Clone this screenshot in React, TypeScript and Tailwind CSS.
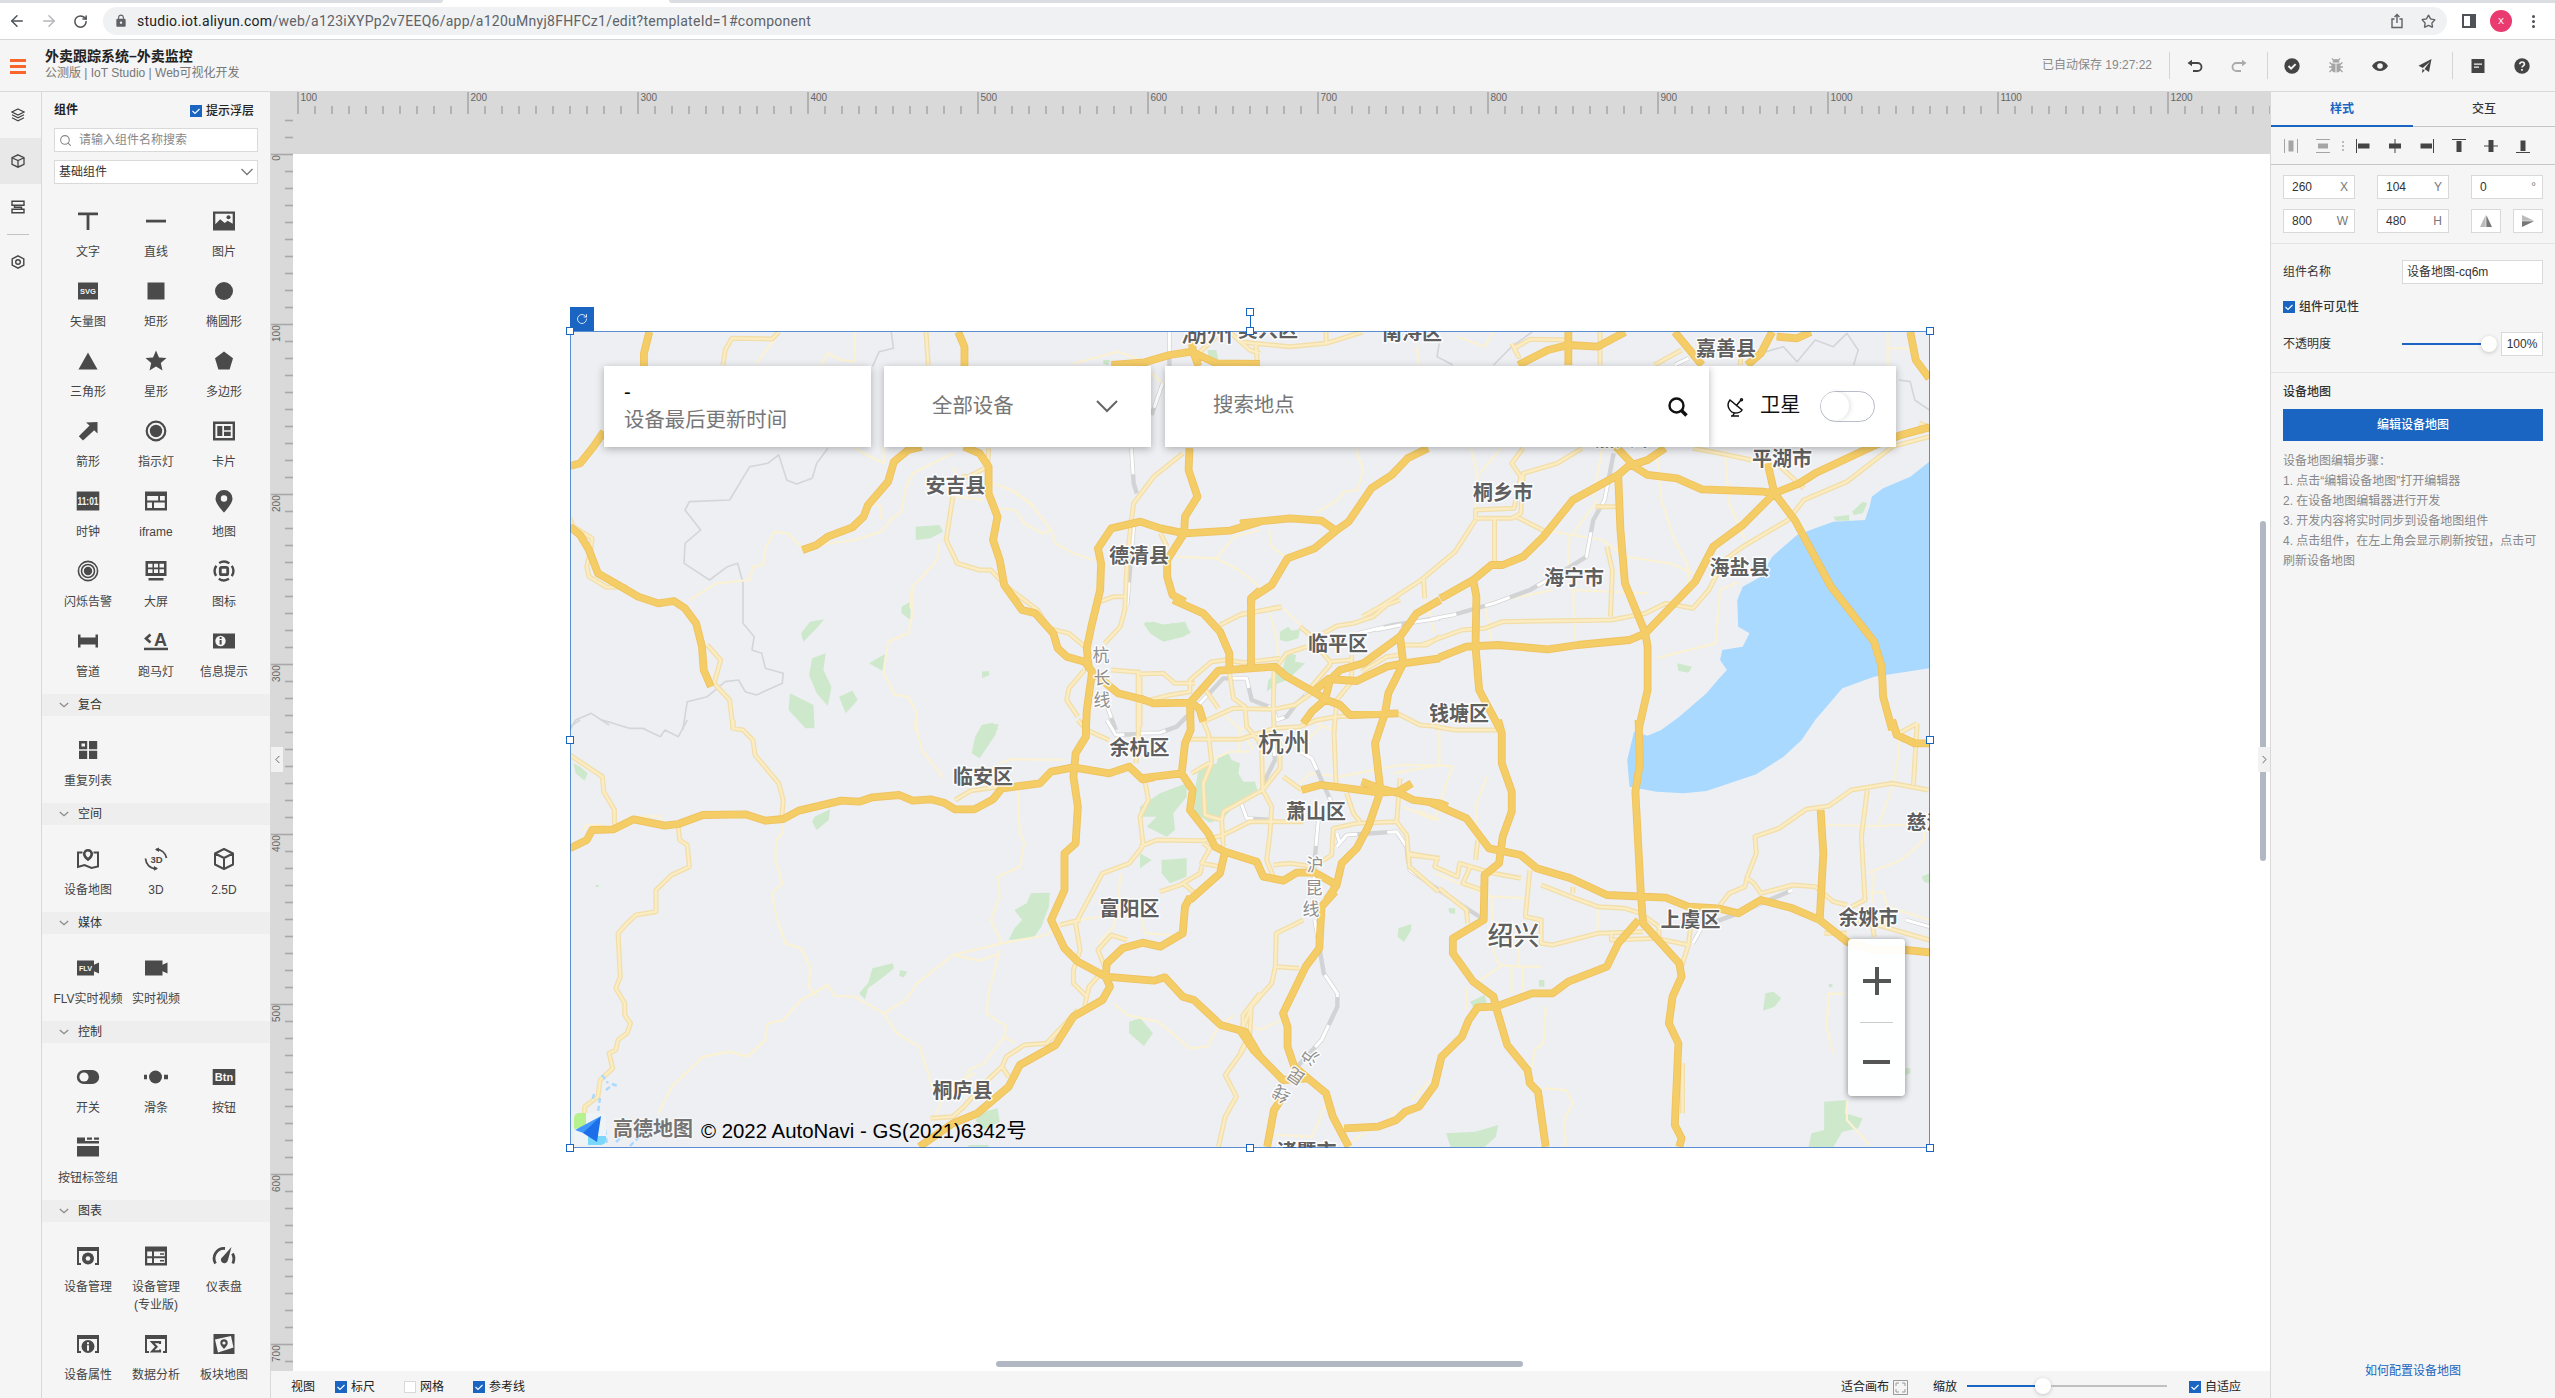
import React from "react";
import {
  LuArrowLeft,
  LuArrowRight,
  LuChevronLeft,
  LuChevronRight,
  LuRotateCw,
  LuSearch,
  LuStar,
} from "react-icons/lu";
import { MdLock } from "react-icons/md";

/* ---------------------------------------------------------------- */
/* Map                                                              */
/* ---------------------------------------------------------------- */

type Tile = {
  frame: string;
  green?: string;
  water?: string;
  border?: string;
  minor?: string;
  rail?: string;
  second?: string;
  major?: string;
};

const TILES: Tile[] = [
  {
    frame: "translate(560 300) scale(0.44643 0.33333)",
    green:
      "M797 680L850 675L858 695L830 715L797 720ZM540 1000L560 965L592 958L575 985L545 1025ZM565 1075L595 1060L590 1110L608 1160L600 1218L575 1180L558 1125ZM515 1180L568 1215L570 1285L550 1285L512 1230ZM625 1190L655 1172L667 1200L640 1240ZM692 1090L728 1062L722 1112ZM1310 965L1345 975L1400 965L1412 1000L1350 1020ZM765 920L785 905L785 960L765 940ZM1450 150L1470 150L1475 180L1455 180ZM1217 180L1232 180L1228 196L1217 192ZM945 1115L960 1112L962 1125L946 1135ZM945 1275L970 1268L983 1290L950 1290Z",
    border:
      "M742 96L747 145L715 155L700 200M600 445L575 490L565 535L530 552L508 540L490 465L465 490L425 500L380 600L290 605L280 630L315 690L280 730L278 790L335 840L375 800L398 790L410 850L410 970L435 1010L430 1050L452 1060L460 1105L500 1120L498 1150L440 1185L415 1175L400 1140L370 1145L330 1190L285 1205L275 1290M22 1290L35 1260L70 1240L110 1275",
    minor:
      "M660 96L660 185L630 180L600 160L585 195M485 110L440 190M290 900L350 850L425 840L432 800L455 795L460 745L480 695L510 700L543 745M575 735L660 720L720 695L740 660L765 635L775 560L790 520L880 460M690 600L718 620L720 660M850 730L845 780L790 860L790 940L780 1000L735 1025L725 1120L750 1185L780 1190L800 1240L795 1290M660 445L725 490L725 440M970 550L1020 575L1060 620L1100 690L1110 730L1150 760L1195 780M985 625L1020 630L1040 670L1080 700L1100 690M1380 770L1470 775L1510 710L1568 690M1470 775L1520 810L1568 860M1150 190L1180 180L1250 155L1300 180M880 500L895 540L890 590L950 600M1320 215L1350 250M788 860L785 925M1010 570L1060 615",
    rail: "M1365 96L1365 200M1280 445L1285 550L1292 580M1350 250L1325 345M1285 680L1270 920M1215 1180L1245 1290",
    second:
      "M490 96L475 117L385 115L370 150L365 195M820 96L825 195M22 655L30 680L72 715L70 740L60 800L65 830L105 862L150 860M330 1035L360 1080L345 1150L380 1200L388 1290M960 445L958 500L915 530L900 530M880 590L865 720L890 790L940 810L965 810L1000 860L1070 930L1095 985L1140 1000L1180 1045M1395 460L1330 530L1285 610L1278 680L1270 790L1265 930L1255 980L1220 1030M1210 905L1240 890L1268 890M1235 1110L1300 1117M1175 1110L1140 1165L1135 1200L1160 1250M1295 1120L1295 1290M1345 700L1360 740M1500 96L1545 150L1568 160M1470 110L1430 160",
    major:
      "M200 96L188 160L188 198M98 395L75 440L45 490L22 498M22 680L45 705L65 750L85 820L130 855L175 890L220 910L255 903L280 925L305 970L318 1040L322 1110L338 1160M543 750L575 735L600 710L655 682L680 650L690 615L735 545L748 485L780 450L810 440M892 96L906 140L906 198M905 440L940 460L960 500L960 580L980 650L970 720L985 780L995 855L1035 930L1065 940L1105 1000L1115 1045L1135 1070L1175 1085L1192 1115L1250 1180L1310 1200M1410 445L1408 510L1428 590L1400 650L1398 700L1360 780L1360 830L1372 885L1400 905M1185 1110L1180 1045L1190 980L1210 870L1212 790L1205 745L1235 685L1300 665L1345 685L1400 700L1500 692L1568 665M1568 870L1548 895L1548 910M1192 1115L1180 1230L1178 1290M1235 195L1310 187L1365 165L1415 155L1470 190L1568 192M1415 120L1418 155L1430 198",
  },
  {
    frame: "translate(1240 300) scale(0.4529 0.33333)",
    green:
      "M965 1090L998 1100L990 1118L968 1112ZM1310 650L1345 645L1345 662L1315 662ZM1352 635L1375 605L1385 610L1375 640L1355 645Z",
    water:
      "M1522 485L1480 530L1420 565L1395 590L1390 620L1380 660L1310 665L1270 685L1230 705L1175 770L1150 830L1110 860L1098 900L1100 980L1125 1000L1110 1040L1065 1050L1060 1080L1075 1110L1055 1140L1030 1180L970 1250L930 1290L900 1307L870 1295L855 1380L860 1460L920 1475L980 1480L1030 1473L1140 1423L1200 1370L1240 1320L1270 1260L1330 1165L1400 1130L1522 1105Z",
    border:
      "M645 96L600 140L560 195M440 130L435 170L470 195M1150 160L1200 140L1230 185L1270 120L1310 140L1340 100L1365 150L1355 195M1455 240L1480 245L1490 300L1522 330",
    minor:
      "M255 445L272 510L260 570L230 575L215 600L165 640M65 690L70 740L105 775M510 445L525 530L520 625M575 445L530 520M920 450L930 600L960 720L990 800L990 850M1070 445L1080 610L1115 720M670 690L800 720L850 770L950 790L1000 820M725 800V720L790 600M735 850L740 1020M540 910L555 1020M410 900L430 1000M920 1075L960 1060L1050 1030L1060 870L1100 845M1430 96V230M1430 145H1480M390 140L395 195M735 870L900 880M480 110L540 140L560 96M780 590L800 445M545 910L690 870",
    rail: "M300 990L390 965L470 945L560 910L640 870L730 800L765 770L780 660L805 600L825 460M960 195L990 175",
    second:
      "M625 445L600 490L620 530L605 625L520 630L520 655L600 655L620 640L625 520L700 490L755 445M520 660L475 755L400 840L310 920L270 950M562 655V785M610 650L675 695M1000 445L1060 460L1130 480M1185 490L1245 565M1522 410L1440 440L1340 545L1245 600L1210 660L1110 740L1070 780L1035 870L1000 925L940 910L895 940L820 960L580 965L540 985L490 990L400 1035M810 740L822 810L818 950M785 620H830M405 830L408 895M0 125L30 130L110 140L190 130L270 96M0 945L90 920M725 120L640 118L605 145L615 170L600 130M915 195L975 150M190 130V96M1105 170V195M795 96V195M1500 370L1522 380M1130 170V195M35 130L38 190",
    major:
      "M0 670L110 655L180 662L212 692L240 665L290 565L335 525L370 475L415 445M212 692L165 745L105 775L70 855L25 895L25 910M830 440L865 490L835 525L735 600L670 710L625 770L580 795L555 795L515 840L450 890L442 895M938 445L900 480L865 495L900 525L965 535L1020 568L1155 575L1180 580M1165 490L1180 580L1225 660L1305 860L1400 1025L1417 1100L1420 1190L1440 1290M1522 382L1460 405L1395 440L1270 520L1235 550L1180 580L1110 675L1045 740L1005 845L895 1000M835 525L840 690L850 850L895 1000L900 1040L900 1170L880 1290M440 1072L500 1040L570 1035L680 1048L745 1035L860 1020L895 1000M515 840L522 890L520 1040L528 1170L575 1290M725 96V195M615 195L680 150L725 135L790 140L850 96M960 96L1020 195M1175 96L1150 160L1120 195M1185 110L1230 115L1260 96M1480 96L1492 180L1522 235",
  },
  {
    frame: "translate(560 720) scale(0.44643 0.33333)",
    green:
      "M930 50L945 15L982 12L975 45L940 115L922 100ZM30 130L45 140L62 160L55 182L35 160ZM570 290L605 268L602 300L575 330L565 305ZM1055 520L1097 518L1095 560L1078 620L1060 655L1005 660L1018 625L1035 600L1018 570L1045 550ZM700 745L745 730L748 745L725 770L690 805L683 838L670 820L690 790ZM762 750L778 755L770 772L760 768ZM1275 905L1300 895L1328 940L1308 978L1275 940ZM950 1175L980 1165L985 1205L950 1230L930 1200ZM80 495L88 495L86 502L80 500ZM915 1275L960 1275L960 1281L915 1281ZM540 0L568 0L568 22L555 22Z",
    border: "M22 20L45 0M95 0L155 25L185 25L225 50L235 30L265 50L285 0",
    minor:
      "M795 0L810 90L860 175M985 130L1010 118L1130 120M1025 205L1030 340L1040 370L1030 440L980 470L985 530L965 600L990 670L880 705L800 790L775 840L725 880M990 670L1090 645L1120 615M880 705L940 722L985 700M500 297L498 340L485 360L482 420L498 490L475 520L485 590L505 670L540 685L560 740L558 800L575 830M725 880L660 830L615 828L600 795L540 840L500 900L465 910L460 960L420 1010L380 995L320 1010L250 1100L220 1180M725 880L755 940L805 980L825 1060L840 1130M985 690L960 820L955 880L1000 920L995 950L1020 970M995 950L950 1030L915 1050L910 1080M1255 460L1250 560L1240 620L1205 670M1240 850L1270 885L1340 905L1380 950L1410 985L1450 980L1475 920L1510 885M50 330L60 315L95 315M180 290L225 288L230 310M1165 600L1300 570L1310 640L1370 645M840 1190L860 1130L900 1080L930 1060",
    rail: "M1225 0L1245 45L1299 42",
    second:
      "M22 105L95 170L98 215L122 270L122 320M388 0L388 25L410 30L432 60L437 105L490 190L500 240L497 290M265 320L268 360L285 375L290 440L250 465L215 510L215 575L170 585L150 610L130 640L135 770L125 805L145 850L145 885L158 910L150 940L130 960L125 990L110 1000L118 1045L90 1080L85 1130L55 1160L55 1180M885 240L920 212L985 200M1160 0L1180 30L1230 60M1305 380L1275 430L1215 460L1195 510L1175 560L1155 610L1165 690L1150 750L1150 790L1180 830M1120 615L1165 600M1160 870L1090 970L1040 975L1000 1010L990 1040L950 1090L905 1160L880 1190L830 1195M990 1040L1005 1070M1205 770L1185 800L1175 860M1220 740L1205 690L1235 645L1270 660M1568 820L1530 885L1530 930M1535 975L1525 1000L1490 1065L1515 1130L1490 1190L1475 1280M1298 0L1290 130",
    major:
      "M22 385L60 360L72 330L120 328L165 298L235 317L265 312L320 285L415 283L460 302L500 297L535 272L630 242L670 245L700 232L760 225L790 242L830 238L860 248L885 268L928 268L970 238L990 205L1075 190L1100 155L1150 142L1230 160L1275 140L1305 178L1330 172M1178 0L1178 50L1155 100L1150 170L1160 260L1155 370L1130 400L1130 510L1100 600L1130 685L1160 725L1222 770L1330 782L1355 772L1395 830L1420 840L1480 915L1535 935L1568 1010M1412 530L1400 560L1395 640L1345 680L1305 668L1260 685L1225 730L1222 770L1232 800L1215 840L1150 890L1110 975L1030 1035L1005 1100L935 1180L880 1210L805 1280",
  },
  {
    frame: "translate(1240 720) scale(0.4529 0.33333)",
    green:
      "M350 625L378 612L378 630L362 665L348 650ZM455 1240L520 1235L570 1215L565 1250L540 1281L465 1281ZM1290 1145L1340 1140L1335 1180L1375 1195L1365 1225L1330 1235L1310 1281L1255 1281L1262 1240L1290 1230ZM1160 820L1178 815L1195 835L1180 860L1155 872ZM508 845L540 825L545 850L515 862ZM660 780L672 780L672 800L660 800ZM460 565L475 565L475 582L462 578ZM1505 470L1522 460V490L1510 485ZM1470 1045L1480 1045V1060L1470 1065ZM1300 792H1308V802H1300Z",
    minor:
      "M440 0V130M340 160L440 135L470 140L455 190L430 300L360 260M545 170L520 260L525 360M555 530L640 535M555 530L560 700L575 740L530 780M615 680V740L575 735M615 740L665 740M600 740V820M625 740V820M500 800V870M675 860L670 970L650 990L645 1040M670 1105L720 1110L735 1150L715 1200L720 1280M1335 822L1300 820L1295 920L1310 1000M1290 315L1410 318L1522 310M1385 460L1460 420L1510 360V310M1440 200L1410 315M1340 1140V1200L1390 1275M80 1245L160 1250L190 1150M1400 460L1395 550M790 560V640M15 910L45 930L90 900M430 460L555 530M380 1140L420 1080M330 1190L345 1170M1455 40L1455 100L1440 200M240 1270L280 1235M1390 520L1420 515L1430 560L1522 600",
    rail: "M372 400L375 450L455 525L540 600M165 600L185 760L215 820L215 860L180 960L120 1050M1000 670L1020 620L1100 580L1220 510M1470 600L1522 620",
    second:
      "M430 20L475 30L575 30M372 400L435 415L430 440L480 470L485 430L560 460L620 475M520 420L525 360M510 435L492 490L535 510M640 450L630 590L665 600L665 670L690 675L790 640L890 635M665 495L740 535L790 560L850 565L885 580M735 500L735 520M820 635L820 660L920 655L990 675L975 740M895 590L925 620L925 650M1060 555L1080 520L1115 500L1120 470L1140 400L1137 350L1190 325L1250 268L1300 258L1350 210L1440 190L1520 210M1120 475L1135 490L1150 520L1220 495L1270 500L1310 545L1340 555M1385 210L1372 350L1380 540L1350 560M1495 10L1455 40M1495 10L1487 195M1355 600L1420 620L1522 660M1290 640L1340 640M1395 600L1400 650M140 600L80 640L78 740L70 790L25 860L5 930M80 740L130 745M25 860L22 940L0 1000M977 1030L977 1180M440 505L500 570L503 610M990 675L995 620",
    major:
      "M430 250L420 247L500 295L550 385L620 405L655 445L730 475L810 525L940 533L990 560L1055 565L1100 580L1150 540L1220 565L1280 600L1340 665L1400 690L1470 690L1522 697M570 0L578 40L578 130L600 215L600 275L580 350L572 430L540 465L538 600L470 655L470 700L515 785L560 830L565 860L590 975L635 1050L640 1090L658 1115L675 1280M565 860L645 820L690 820L725 785L810 740L835 670L880 600M565 860L525 862L505 900L490 950L445 1010L430 1095L395 1160L365 1175L345 1200L305 1220L230 1225M880 0L883 130L873 215L885 520L890 610L970 730L975 770L955 830L947 910L968 970L960 1215L975 1255L970 1280M1282 270L1288 400L1280 600M1440 0L1450 45L1490 70L1522 70M210 515L180 560L175 685L145 740L95 880L105 920L105 980L120 1040L150 1075M0 930L30 990L95 1080L150 1075L190 1120L205 1190L240 1280M90 1140L75 1170L60 1280",
  },
  {
    frame: "translate(1140 600) scale(0.33333)",
    green:
      "M175 510L230 490L235 470L265 460L275 480L300 490L295 520L310 545L345 545L352 570L300 600L250 655L210 668L165 640L165 570ZM0 620L60 580L140 550L140 590L100 640L105 690L80 710L20 680L50 650L0 650ZM65 780L140 775L140 830L90 850L65 820ZM0 760L35 780L0 805ZM10 70L40 65L75 75L100 70L120 90L155 95L130 110L70 125L30 100ZM420 95L445 80L455 92L480 88L475 115L440 125L420 120ZM385 240L430 200L440 160L468 165L465 185L495 190L480 205L440 240L415 250L380 275Z",
    minor:
      "M390 40L410 120L415 170M430 25L490 85M240 330L300 390L297 450M297 390L320 380M530 370L575 390M500 420L545 380M480 550L510 520L600 530L780 495L900 497M215 480L270 455L330 455M310 400L340 450M865 20L880 80M780 535L785 600M830 630L900 660",
    rail: "M0 400L60 398L110 380L180 310L250 235L320 235L335 300L400 325L410 360L440 350L470 310L550 240M655 100L760 75L900 55M395 390L405 480L370 550M480 455L515 475L540 530L580 620M300 600L320 655L400 660M590 740L620 705L770 695L800 740L805 790M535 660L525 770L520 880M590 700L600 730",
    second:
      "M0 222L70 220L105 250L165 250M0 308L90 285L150 275L150 240L215 185L260 180L310 188L420 175M240 75L305 42L425 22M480 80L510 105L540 150L570 185L635 180M550 100L590 78L640 70L700 50L740 15L780 0M400 320L402 210L440 160L500 140M190 365L280 325L400 328L465 315L520 275M268 215L280 295L315 320L320 380L355 420L365 450L368 570L395 620L390 700L380 780L400 830M400 320L402 390L420 440L420 505L368 570L250 635L245 660L195 645L190 550L215 490L205 400L190 365M150 418L300 418L400 385L480 380L530 360L590 350L775 342L840 375L900 380M510 265L570 195L570 185M635 165L635 245L590 300L582 400L588 550M665 215L740 170L780 165M790 135L860 135L900 110M155 520L215 485M190 260L235 325M0 740L50 720L190 722L250 705L330 665L490 665M245 660L250 740M190 730L210 745L185 790L240 800M185 800L180 820L120 855L60 875M130 850L165 880M15 545L25 600L0 650L10 740M400 795L450 790L520 800L575 765L580 685L650 670L770 665L780 535M620 580L640 640L660 665M770 665L800 705L805 765L900 775M805 765L808 800L895 875M430 530L485 570M0 230V380",
    major:
      "M100 0L190 40L240 95L268 160L268 210M333 0V200M0 295L40 310L150 308L235 212L405 200L440 230L520 275L560 300L600 315L630 345L775 340M150 308L152 390L135 430L125 520L0 535M125 520L158 570L150 630L205 700L225 740L255 755L350 785L370 830L430 842L470 818L525 818L590 855M255 755L240 820L150 900M150 308L178 325L190 365M490 370L515 335L555 300L570 240L600 210L670 190L780 110L830 40L900 0M520 275L565 237L650 243L740 200L790 190L900 175M780 110L790 190L745 280L735 340L705 430L720 560M485 570L540 555L600 562L720 578L770 575L820 600L900 610L922 620M665 545L720 565L770 578L815 550M720 578L685 680L650 745L605 790L590 855L560 900",
  },
];

type Layer = "green" | "water" | "border" | "minor" | "rail" | "second" | "major";

function Stroke({ layer, color, width, dash }: { layer: Layer; color: string; width: number; dash?: string }) {
  return (
    <>
      {TILES.map((t) =>
        t[layer] ? (
          <path
            key={t.frame}
            transform={t.frame}
            d={t[layer]}
            fill="none"
            stroke={color}
            strokeWidth={width}
            strokeDasharray={dash}
            strokeLinejoin="round"
            vectorEffect="non-scaling-stroke"
          />
        ) : null
      )}
    </>
  );
}

function Fill({ layer, color }: { layer: Layer; color: string }) {
  return (
    <>
      {TILES.map((t) => (t[layer] ? <path key={t.frame} transform={t.frame} d={t[layer]} fill={color} /> : null))}
    </>
  );
}

const PLACES: [string, number, number, number][] = [
  ["湖州", 1181, 332, 26],
  ["吴兴区", 1238, 330, 20],
  ["南浔区", 1382, 333, 20],
  ["嘉善县", 1696, 348.5, 20],
  ["嘉兴市", 1595, 439, 20],
  ["平湖市", 1752, 458.5, 20],
  ["安吉县", 925.5, 486, 20],
  ["桐乡市", 1473, 492.5, 20],
  ["德清县", 1109, 555.5, 20],
  ["海宁市", 1544, 577.5, 20],
  ["海盐县", 1709.5, 567.5, 20],
  ["临平区", 1308, 643.5, 20],
  ["钱塘区", 1429, 713.5, 20],
  ["杭州", 1258, 742, 26],
  ["余杭区", 1109.5, 747.5, 20],
  ["临安区", 953, 776.5, 20],
  ["萧山区", 1286, 812, 20],
  ["慈溪市", 1906.5, 822.5, 20],
  ["富阳区", 1099.5, 909, 20],
  ["绍兴", 1487.5, 935, 26],
  ["上虞区", 1660.5, 919.5, 20],
  ["余姚市", 1838.5, 917.5, 20],
  ["桐庐县", 932.5, 1091, 20],
  ["诸暨市", 1276.5, 1152, 20],
];

const LINES: [string, number, number, number][] = [
  ["杭", 1101, 655, 0],
  ["长", 1102, 678, 0],
  ["线", 1102, 700, 0],
  ["沪", 1315, 865, 0],
  ["昆", 1314, 888, 0],
  ["线", 1311, 909, 0],
  ["沪", 1310, 1056, -145],
  ["昆", 1296, 1076, -145],
  ["线", 1281, 1094, -145],
];

function MapDrawing() {
  return (
    <svg viewBox="570 331 1360 817" className="block h-full w-full bg-[#edeff3]">
      <Fill layer="green" color="#cde8ca" />
      <Fill layer="water" color="#a9d9ff" />
      <Stroke layer="border" color="#d3d5d9" width={1.6} />
      <Stroke layer="minor" color="#fbf2d4" width={2.2} />
      <Stroke layer="rail" color="#d2d3d4" width={4.4} />
      <Stroke layer="rail" color="#ffffff" width={3} dash="26 30" />
      <Stroke layer="second" color="#f2deaa" width={5} />
      <Stroke layer="second" color="#fbecc2" width={2.4} />
      <Stroke layer="major" color="#efc25f" width={7.8} />
      <Stroke layer="major" color="#f5cd67" width={6} />
      <path d="M602 1075l6 8M606 1090l5-4M594 1094l-2 8M600 1098l-3 22M612 1084l6 2M604 1122l3 22M616 1142l16-14M630 1146l18-18" stroke="#a9d9ff" strokeWidth="2.4" strokeDasharray="5 3" fill="none" />
      <g
        fontFamily='"Liberation Sans","Noto Sans CJK SC",sans-serif'
        stroke="#ffffff"
        strokeOpacity="0.85"
        strokeWidth="3"
        strokeLinejoin="round"
        paintOrder="stroke"
      >
        {LINES.map(([t, x, y, r], i) => (
          <text key={i} transform={`translate(${x} ${y}) rotate(${r})`} fontSize="17" fill="#8f8f8f" textAnchor="middle" dy="6">
            {t}
          </text>
        ))}
        {PLACES.map(([t, x, y, s]) => (
          <text key={t} x={x} y={y + s * 0.37} fontSize={s} fill="#555" fontWeight={s > 20 ? 500 : 700} fillOpacity="0.95">
            {t}
          </text>
        ))}
      </g>
    </svg>
  );
}

function AmapLogo() {
  return (
    <svg viewBox="0 0 34 34" className="h-[34px] w-[34px]">
      <rect x="1" y="1" width="32" height="32" rx="5" fill="#eef3f6" />
      <path d="M1 17V6a5 5 0 0 1 5-5h7v14z" fill="#b7f08e" />
      <path d="M15 24h18v4a5 5 0 0 1-5 5H15z" fill="#79d8fb" />
      <path d="M28 4L2 18l11 4z" fill="#3f97ff" />
      <path d="M28 4L10 21l14 9z" fill="#1c6fe8" />
    </svg>
  );
}

function Handle({ className }: { className: string }) {
  return <span className={`absolute h-[8px] w-[8px] border border-[#1965c1] bg-white ${className}`} />;
}

function DeviceMap() {
  return (
    <div className="absolute left-[277px] top-[177px] h-[817px] w-[1360px] text-[20.2px] leading-none text-[#777]">
      <MapDrawing />
      <div className="absolute left-[34px] right-[34px] top-[35px] flex h-[81px]">
        <div className="mr-[13px] flex w-[267px] flex-col bg-white pl-[20px] pt-[12px] shadow-[0_2px_8px_rgba(0,0,0,0.28)]">
          <span className="h-[28px] pt-1 text-black">-</span>
          <span className="text-[20.4px] leading-[29px]">设备最后更新时间</span>
        </div>
        <div className="mr-[14px] flex w-[267px] items-center justify-between bg-white pl-[48px] pr-[33px] shadow-[0_2px_8px_rgba(0,0,0,0.28)]">
          <span className="text-[20.4px]">全部设备</span>
          <svg viewBox="0 0 22 14" className="mb-[2px] h-[14px] w-[22px]" fill="none" stroke="#666" strokeWidth="2">
            <path d="M1 2l10 10L21 2" />
          </svg>
        </div>
        <div className="z-10 flex w-[544px] items-center justify-between bg-white pl-[48px] pr-[21px] shadow-[0_2px_8px_rgba(0,0,0,0.28)]">
          <span className="pb-[3px] text-[20.4px]">搜索地点</span>
          <svg viewBox="0 0 20 20" className="h-[20px] w-[20px]" fill="none" stroke="#111">
            <circle cx="8.5" cy="8.5" r="7" strokeWidth="2.4" />
            <path d="M13.5 13.5L18.5 18.5" strokeWidth="3.6" />
          </svg>
        </div>
        <div className="flex w-[187px] items-center bg-white pl-[17px] text-[#111] shadow-[0_2px_8px_rgba(0,0,0,0.28)]">
          <svg viewBox="0 0 20 20" className="h-[20px] w-[20px]" fill="none" stroke="#111" strokeWidth="1.5">
            <path d="M4 3C-1 9 5 16 9 16c3 0 6-1 7-3zM10 9l5-6M5 19h8M8 16l-1 3" />
            <circle cx="15.5" cy="2.8" r="1" />
          </svg>
          <span className="ml-[14px] pb-[3px]">卫星</span>
          <span className="ml-[20px] flex h-[31px] w-[55px] rounded-full border-[1.5px] border-[#b9bcc9] bg-white">
            <span className="h-[28px] w-[28px] rounded-full bg-white shadow-[2px_0_4px_rgba(0,0,0,0.1)]" />
          </span>
        </div>
      </div>

      <div className="absolute bottom-[2px] left-[3px] flex items-center text-black">
        <AmapLogo />
        <span className="ml-[6px] text-[20px] font-bold text-[#747474] [text-shadow:0_0_3px_#fff,0_0_3px_#fff]">高德地图</span>
        <span className="ml-[8px] mt-[4px] text-[20.4px] leading-[24px]">© 2022 AutoNavi - GS(2021)6342号</span>
      </div>

      <div className="absolute bottom-[52px] right-[25px] flex h-[157px] w-[57px] flex-col items-center rounded-[4px] bg-white/95 shadow-[0_1px_6px_rgba(0,0,0,0.45)]">
        <svg viewBox="0 0 28 28" className="mt-[28px] h-[28px] w-[28px]" stroke="#555" strokeWidth="4">
          <path d="M14 0V28M0 14H28" />
        </svg>
        <span className="mt-[27px] h-px w-[33px] bg-[#ccc]" />
        <span className="mt-[37px] h-[4px] w-[27px] bg-[#555]" />
      </div>

      <div className="pointer-events-none absolute inset-0 border border-[#1965c1]/70" />
      <span className="absolute -top-[24px] left-0 flex h-[24px] w-[24px] items-center justify-center bg-[#1965c1]">
        <LuRotateCw className="h-[12px] w-[12px] text-white" strokeWidth={1.6} />
      </span>
      <span className="absolute -top-[20px] left-[680px] h-[20px] w-px bg-[#1965c1]" />
      <Handle className="-top-[23px] left-[676px]" />
      <Handle className="-left-[4px] -top-[4px]" />
      <Handle className="-top-[4px] left-[676px]" />
      <Handle className="-right-[4px] -top-[4px]" />
      <Handle className="-left-[4px] top-[405px]" />
      <Handle className="-right-[4px] top-[405px]" />
      <Handle className="-bottom-[4px] -left-[4px]" />
      <Handle className="-bottom-[4px] left-[676px]" />
      <Handle className="-bottom-[4px] -right-[4px]" />
    </div>
  );
}

/* ---------------------------------------------------------------- */
/* Rulers                                                           */
/* ---------------------------------------------------------------- */

const RULER_FONT = '"Liberation Sans",sans-serif';

function TopRuler() {
  const ticks: number[] = [];
  for (let v = 100; v <= 1260; v += 10) ticks.push(v);
  return (
    <svg viewBox="293 92 1977 62" className="block h-[62px] w-full bg-[#d9d9d9]">
      {ticks.map((v) => {
        const x = 127.4 + v * 1.7;
        const big = v % 100 === 0;
        return (
          <g key={v}>
            <rect x={x - 0.2} y={big ? 92 : 106} width="1.6" height={big ? 22 : 8} fill="#a8a8a8" />
            {big && (
              <text x={x + 3} y="101" fontSize="10" fill="#666" fontFamily={RULER_FONT}>
                {v}
              </text>
            )}
          </g>
        );
      })}
    </svg>
  );
}

function SideRuler() {
  const ticks: number[] = [];
  for (let v = -20; v <= 710; v += 10) ticks.push(v);
  return (
    <svg viewBox="271 92 22 1279" className="block h-[1279px] w-[22px] shrink-0 bg-[#d9d9d9]">
      {ticks.map((v) => {
        const y = 154.3 + v * 1.7;
        const big = v % 100 === 0;
        const label = String(v);
        return (
          <g key={v}>
            <rect x={big ? 271 : 285} y={y - 0.6} width={big ? 22 : 8} height="1.6" fill="#a8a8a8" />
            {big && (
              <text
                transform={`translate(280 ${y + 1 + label.length * 5.56}) rotate(-90)`}
                fontSize="10"
                fill="#666"
                fontFamily={RULER_FONT}
              >
                {label}
              </text>
            )}
          </g>
        );
      })}
    </svg>
  );
}

/* ---------------------------------------------------------------- */
/* Component library                                                */
/* ---------------------------------------------------------------- */

const C = "#4a4a4a";
const W = "#f5f5f5";
const BOLD = { fontFamily: '"Liberation Sans",sans-serif', fontWeight: 700, textAnchor: "middle" as const };

const frame = (
  <>
    <path d="M1 3h22v4H1z" fill={C} />
    <path d="M5 20H2V6M19 20h3V6" fill="none" stroke={C} strokeWidth="2" />
  </>
);

const ICONS: Record<string, React.ReactNode> = {
  文字: <path d="M2 3.5h20v2.8h-8.6V21h-2.8V6.3H2z" fill={C} />,
  直线: <path d="M2 10.7h20v2.8H2z" fill={C} />,
  图片: (
    <>
      <path d="M1 2.5h22v19H1z" fill={C} />
      <path d="M3.3 4.8h17.4v10l-5-3-3 2.2-4.5-3.8-4.9 5z" fill={W} />
      <circle cx="16.5" cy="8.3" r="2" fill={C} />
    </>
  ),
  矢量图: (
    <>
      <path d="M2 3.5h20v17H2z" fill={C} />
      <text x="12" y="15" fontSize="7.6" fill={W} {...BOLD}>SVG</text>
    </>
  ),
  矩形: <path d="M3.5 3.5h17v17h-17z" fill={C} />,
  椭圆形: <circle cx="12" cy="12" r="9" fill={C} />,
  三角形: <path d="M12 3.5l9.5 17h-19z" fill={C} />,
  星形: <path d="M12 1.5l3 7 7.5.6-5.7 5 1.7 7.4L12 17.6l-6.5 3.9 1.7-7.4-5.7-5 7.5-.6z" fill={C} />,
  多边形: <path d="M12 2.5l9 6.7-3.4 11.3H6.4L3 9.2z" fill={C} />,
  箭形: <path d="M21.5 3v11.5l-3.3-3.3L7 21.5 2.8 17.3 13.6 6.6 10 3.6z" fill={C} />,
  指示灯: (
    <>
      <circle cx="12" cy="12" r="9.3" fill="none" stroke={C} strokeWidth="2.2" />
      <circle cx="12" cy="12" r="6.2" fill={C} />
    </>
  ),
  卡片: (
    <>
      <path d="M2.2 3.7h19.6v16.6H2.2z" fill="none" stroke={C} strokeWidth="2.4" />
      <path d="M5.3 7h5v10h-5zM12 7h6.700v4.200H12zM12 12.800h6.700V17H12z" fill={C} />
    </>
  ),
  时钟: (
    <>
      <path d="M.7 2.500h22.600v19H.7z" fill={C} />
      <text transform="translate(12 16) scale(0.8 1)" fontSize="10.500" fill={W} {...BOLD}>11:01</text>
    </>
  ),
  iframe: (
    <>
      <path d="M1 2.500h22v19H1z" fill={C} />
      <path d="M3.200 7h11v4.500h-11zM16 7h4.800v4.500H16zM3.200 13.500H8V19H3.200zM10 13.500h10.800V19H10z" fill={W} />
    </>
  ),
  地图: (
    <>
      <path d="M12 1a8.500 8.500 0 0 1 8.500 8.500C20.500 15 12 23.500 12 23.500S3.500 15 3.500 9.500A8.500 8.500 0 0 1 12 1z" fill={C} />
      <circle cx="12" cy="9.500" r="3.200" fill={W} />
    </>
  ),
  闪烁告警: (
    <g fill="none" stroke={C} strokeWidth="1.600">
      <circle cx="12" cy="12" r="9.600" />
      <circle cx="12" cy="12" r="6.500" />
      <circle cx="12" cy="12" r="3.400" fill={C} />
    </g>
  ),
  大屏: (
    <>
      <path d="M1.500 2h21v15h-21zM4.500 19h15v2.500h-15z" fill={C} />
      <path d="M4 4.800h4.500v3.700H4zM10 4.800h4v3.700h-4zM15.500 4.800H20v3.700h-4.500zM4 10.200h4.500v3.700H4zM10 10.200h4v3.700h-4zM15.500 10.200H20v3.700h-4.500z" fill={W} />
    </>
  ),
  图标: (
    <g fill="none" stroke={C} strokeWidth="2.400">
      <circle cx="12" cy="12" r="9.300" strokeDasharray="10.600 4" strokeDashoffset="-2" transform="rotate(-45 12 12)" />
      <rect x="8.300" y="8.300" width="7.400" height="7.400" rx="1.500" strokeWidth="2.800" />
    </g>
  ),
  管道: <path d="M2 5.500h2.500v3h15v-3H22v13h-2.500v-3h-15v3H2z" fill={C} />,
  跑马灯: (
    <>
      <path d="M0 18.700h24v2.500H0z" fill={C} />
      <path d="M6.500 5.500L2 9.500l4.500 4" stroke={C} strokeWidth="2.600" fill="none" />
      <text x="16.500" y="16.500" fontSize="18" fill={C} {...BOLD}>A</text>
    </>
  ),
  信息提示: (
    <>
      <path d="M1 4.500h22v15H1z" fill={C} />
      <circle cx="8.500" cy="12" r="5.200" fill={W} />
      <path d="M7.600 8h2v2h-2zM7.600 11h2v4.500h-2z" fill={C} />
    </>
  ),
  重复列表: (
    <>
      <path d="M3 3h8.200v8.200H3zM13 3h8.200v8.200H13zM3 12.800h8.200V21H3zM13 12.800h8.200V21H13z" fill={C} />
      <path d="M5.500 5.500h3.500v3H5.500z" fill={W} />
    </>
  ),
  设备地图: (
    <g fill="none" stroke={C} strokeWidth="2">
      <path d="M6.500 5.500H2V20l6.500-2 7 3 6.500-1.500V5.500h-4.500" />
      <path d="M12 12.500c-3-2.300-3.800-3.500-3.800-5.500a3.800 3.800 0 0 1 7.600 0c0 2-.8 3.200-3.800 5.500z" strokeWidth="2.600" />
    </g>
  ),
  "3D": (
    <>
      <text x="12.500" y="15.500" fontSize="9.500" fill={C} {...BOLD}>3D</text>
      <path d="M12 2.300c5 0 9.300 3.200 10.500 8.700M12.500 21.700C6 21.500 2 17.500 1.500 11.500" fill="none" stroke={C} strokeWidth="1.800" />
      <path d="M15 .5v4.500l-4-2.500zM10 19v4.800l4-2.300z" fill={C} />
    </>
  ),
  "2.5D": (
    <g fill="none" stroke={C} strokeWidth="2" strokeLinejoin="round">
      <path d="M12 2l9 4.500v11L12 22l-9-4.500v-11zM3 6.500l9 4.500 9-4.500M12 11v11" />
    </g>
  ),
  FLV实时视频: (
    <>
      <path d="M1 4.500h17v4.300l5-2.300v11l-5-2.300v4.300H1z" fill={C} />
      <text x="9.500" y="15" fontSize="7.300" fill={W} {...BOLD}>FLV</text>
    </>
  ),
  实时视频: <path d="M1 4.500h17.500v4.300l5-2.300v11l-5-2.300v4.300H1z" fill={C} />,
  开关: (
    <>
      <rect x=".8" y="5" width="22.400" height="14" rx="7" fill={C} />
      <circle cx="8" cy="12" r="4.600" fill={W} />
    </>
  ),
  滑条: (
    <>
      <circle cx="11.500" cy="12" r="6.500" fill={C} />
      <path d="M0 9.700h3v4.600H0zM20 9.700h4v4.600h-4z" fill={C} />
    </>
  ),
  按钮: (
    <>
      <path d="M.7 4h22.600v16H.7z" fill={C} />
      <text x="12" y="16" fontSize="11" fill={W} {...BOLD}>Btn</text>
    </>
  ),
  按钮标签组: (
    <path d="M1 2.500h8V6h14v2.500H1zM11 2.500h5v2.300h-5zM18 2.500h5v2.300h-5zM1 11h22v10.500H1z" fill={C} />
  ),
  设备管理: (
    <>
      {frame}
      <circle cx="12" cy="14.500" r="6" fill={C} />
      <circle cx="12" cy="14.500" r="2.300" fill={W} />
    </>
  ),
  "设备管理(专业版)": (
    <>
      <path d="M1 2.500h22v19H1z" fill={C} />
      <path d="M3.200 7.500H8v4.800H3.200zM3.200 14.200H8V19H3.200zM10 7.500h10.800v4.800H10zM10 14.200h10.800V19H10z" fill={W} />
      <path d="M16 9.200h4v1.500h-4zM16 15.900h4v1.500h-4z" fill={C} />
    </>
  ),
  仪表盘: (
    <>
      <path d="M3.500 19.500a10 10 0 0 1 9.500-15M20.500 9.500c1.800 3 1.800 6.500.3 10" fill="none" stroke={C} strokeWidth="2.800" />
      <path d="M19.500 3l-3.700 13.500a3.500 3.500 0 1 1-5-3.800z" fill={C} />
    </>
  ),
  设备属性: (
    <>
      {frame}
      <circle cx="12" cy="14.500" r="6.500" fill={C} />
      <path d="M11 10.300h2v2h-2zM11 13.300h2v5.500h-2z" fill={W} />
    </>
  ),
  数据分析: (
    <>
      {frame}
      <path d="M16 12v-1.800H8.200l4.300 4.500-4.300 4.600H16v-1.800" fill="none" stroke={C} strokeWidth="2.200" />
    </>
  ),
  板块地图: (
    <>
      <path d="M1.500 2h21v20h-21z" fill={C} />
      <path d="M3 7.500L19 4l2.500 11.500L6 20.500z" fill={W} />
      <path d="M12 17c-2.800-3-3.700-4.300-3.700-6a3.700 3.700 0 0 1 7.400 0c0 1.700-.9 3-3.700 6z" fill={C} />
      <circle cx="12" cy="11" r="1.600" fill={W} />
    </>
  ),
};

const BASIC = [
  "文字", "直线", "图片", "矢量图", "矩形", "椭圆形", "三角形", "星形", "多边形", "箭形", "指示灯",
  "卡片", "时钟", "iframe", "地图", "闪烁告警", "大屏", "图标", "管道", "跑马灯", "信息提示",
];

const SECTIONS: [string, string[]][] = [
  ["复合", ["重复列表"]],
  ["空间", ["设备地图", "3D", "2.5D"]],
  ["媒体", ["FLV实时视频", "实时视频"]],
  ["控制", ["开关", "滑条", "按钮", "按钮标签组"]],
  ["图表", ["设备管理", "设备管理(专业版)", "仪表盘", "设备属性", "数据分析", "板块地图"]],
];

function Cells({ items }: { items: string[] }) {
  return (
    <div className="mx-[12px] grid grid-cols-3 pb-[5px]">
      {items.map((name) => (
        <div key={name} className="flex min-h-[70px] flex-col items-center pt-[10px]">
          <svg viewBox="0 0 24 24" className="h-[24px] w-[24px]">
            {ICONS[name]}
          </svg>
          <span className="mt-[10px] whitespace-nowrap pb-[8px] text-center leading-[18px]">
            {name.endsWith("(专业版)") ? (
              <>
                设备管理
                <br />
                (专业版)
              </>
            ) : (
              name
            )}
          </span>
        </div>
      ))}
    </div>
  );
}

function Check({ on = true }: { on?: boolean }) {
  return (
    <span
      className={
        on
          ? "flex h-[12px] w-[12px] shrink-0 items-center justify-center bg-[#1965c1]"
          : "h-[12px] w-[12px] shrink-0 border border-[#d9d9d9] bg-white"
      }
    >
      {on && (
        <svg viewBox="0 0 12 12" className="h-[12px] w-[12px]" fill="none" stroke="#fff" strokeWidth="1.1">
          <path d="M2.500 6l2.500 2.500 4.500-4.500" />
        </svg>
      )}
    </span>
  );
}

function Library() {
  return (
    <aside className="flex w-[229px] shrink-0 flex-col overflow-hidden border-r border-[#d9d9d9] text-[#444]">
      <div className="mx-[12px] flex h-[36px] items-center">
        <span className="flex-1 font-bold text-[#222]">组件</span>
        <span className="mt-px flex items-center gap-1 font-medium text-[#222]">
          <Check />
          <span className="mr-[4px]">提示浮层</span>
        </span>
      </div>
      <div className="mx-[12px] flex h-[24px] items-center border border-[#d9d9d9] bg-white pl-[4px] text-[#888]">
        <LuSearch className="h-[13px] w-[13px]" />
        <span className="ml-[7px]">请输入组件名称搜索</span>
      </div>
      <div className="mx-[12px] mt-[8px] flex h-[24px] items-center justify-between border border-[#d9d9d9] bg-white px-[4px] text-[#333]">
        <span>基础组件</span>
        <svg viewBox="0 0 12 8" className="h-[8px] w-[12px]" fill="none" stroke="#777" strokeWidth="1.300">
          <path d="M.5 1L6 6.500 11.500 1" />
        </svg>
      </div>
      <div className="mt-[15px]">
        <Cells items={BASIC} />
      </div>
      {SECTIONS.map(([title, items]) => (
        <section key={title}>
          <h3 className="mb-[12px] flex h-[22px] items-center bg-[#eeeeee] pl-[17px] text-[#333]">
            <svg viewBox="0 0 10 6" className="h-[6px] w-[10px]" fill="none" stroke="#888" strokeWidth="1.200">
              <path d="M.8 1L5 4.800 9.200 1" />
            </svg>
            <span className="ml-[9px]">{title}</span>
          </h3>
          <Cells items={items} />
        </section>
      ))}
    </aside>
  );
}

/* ---------------------------------------------------------------- */
/* Chrome, header, rail                                             */
/* ---------------------------------------------------------------- */

function BrowserBar() {
  return (
    <div className="flex h-[40px] shrink-0 flex-col border-b border-[#d5d6d8] bg-white">
      <div className="flex h-[3px] shrink-0">
        <span className="w-[443px] rounded-br bg-[#dadde2]" />
        <span className="w-[226px]" />
        <span className="flex-1 rounded-bl bg-[#dadde2]" />
      </div>
      <div className="flex flex-1 items-center text-[#5f6368]">
        <LuArrowLeft className="ml-[8px] h-[18px] w-[18px] text-[#4f5357]" />
        <LuArrowRight className="ml-[14px] h-[18px] w-[18px] text-[#b4b6b9]" />
        <LuRotateCw className="ml-[15px] h-[15px] w-[15px] text-[#4f5357]" strokeWidth={2.4} />
        <div className="ml-[15px] flex h-[28px] flex-1 items-center rounded-full bg-[#eff1f3] pl-[11px] pr-[11px] font-['Roboto'] text-[14px]">
          <MdLock className="h-[14px] w-[14px]" />
          <span className="ml-[9px] tracking-[0.26px]">
            <span className="text-[#202124]">studio.iot.aliyun.com</span>
            /web/a123iXYPp2v7EEQ6/app/a120uMnyj8FHFCz1/edit?templateId=1#component
          </span>
          <svg viewBox="0 0 16 16" className="ml-auto h-[16px] w-[16px]" fill="none" stroke="#5f6368" strokeWidth="1.400">
            <path d="M5.500 6H3v8.500h10V6h-2.500M8 10V1.500M5.500 4L8 1.500 10.500 4" />
          </svg>
          <LuStar className="ml-[16px] h-[15px] w-[15px]" strokeWidth={2.2} />
        </div>
        <span className="ml-[15px] h-[14px] w-[14px] border-2 border-r-[6px] border-[#4f5357]" />
        <span className="ml-[14px] flex h-[22px] w-[22px] items-center justify-center rounded-full bg-[#e93b70] text-[9px] text-white">X</span>
        <span className="ml-[20px] mr-[20px] flex flex-col gap-[2px]">
          <i className="h-[3px] w-[3px] rounded-full bg-[#4f5357]" />
          <i className="h-[3px] w-[3px] rounded-full bg-[#4f5357]" />
          <i className="h-[3px] w-[3px] rounded-full bg-[#4f5357]" />
        </span>
      </div>
    </div>
  );
}

function Tool({ children, className }: { children: React.ReactNode; className: string }) {
  return (
    <svg viewBox="0 0 16 16" className={`h-[16px] w-[16px] shrink-0 ${className}`}>
      {children}
    </svg>
  );
}

function Header() {
  return (
    <header className="flex h-[52px] shrink-0 items-center border-b border-[#d9d9d9]">
      <div className="ml-[10px] mt-px flex w-[16px] flex-col gap-[3px]">
        <i className="h-[3px] bg-[#f8662b]" />
        <i className="h-[3px] bg-[#f8662b]" />
        <i className="h-[3px] bg-[#f8662b]" />
      </div>
      <div className="ml-[19px] mt-[-2px] flex flex-col">
        <span className="text-[14px] font-bold leading-[18px] text-[#222]">外卖跟踪系统–外卖监控</span>
        <span className="leading-[17px] text-[#777]">公测版 | IoT Studio | Web可视化开发</span>
      </div>
      <span className="ml-auto mt-[-1px] text-[#888]">已自动保存 19:27:22</span>
      <span className="ml-[17px] h-[27px] w-px bg-[#d4d4d4]" />
      <Tool className="ml-[17px]">
        <path d="M2 5h8.500a4 4 0 0 1 0 8H6" fill="none" stroke="#444" strokeWidth="1.800" />
        <path d="M.5 5L5 1.800v6.400z" fill="#444" />
      </Tool>
      <Tool className="ml-[28px]">
        <path d="M14 5H5.500a4 4 0 0 0 0 8H10" fill="none" stroke="#aaa" strokeWidth="1.800" />
        <path d="M15.500 5L11 1.800v6.400z" fill="#aaa" />
      </Tool>
      <span className="ml-[20px] h-[27px] w-px bg-[#d4d4d4]" />
      <Tool className="ml-[16px]">
        <circle cx="8" cy="8" r="7.700" fill="#444" />
        <path d="M4.500 8l2.600 2.600 4.500-4.500" fill="none" stroke="#f5f5f5" strokeWidth="2" />
      </Tool>
      <Tool className="ml-[28px]">
        <path d="M4.500 4.500a3.500 3.500 0 0 1 7 0zM3.500 5.500h4V14.500C5 14.500 3.500 13 3.500 11zM8.500 5.500h4V11c0 2-1.500 3.500-4 3.500z" fill="#a5a5a5" />
        <path d="M5.500 2L4 .5M10.500 2L12 .5M4 6.500L1.500 4.500M12 6.500l2.500-2M4 9H1M12 9h3M4 11.500L1.500 14M12 11.500l2.500 2.500" stroke="#a5a5a5" strokeWidth="1.400" />
      </Tool>
      <Tool className="ml-[28px]">
        <path d="M0 8c2-3.500 4.700-5 8-5s6 1.500 8 5c-2 3.500-4.700 5-8 5s-6-1.500-8-5z" fill="#444" />
        <circle cx="8" cy="8" r="2.800" fill="#f5f5f5" />
      </Tool>
      <Tool className="ml-[29px]">
        <path d="M14.500 1L12 14l-4.500-3L13 3.500 5.800 10 1.500 7.800zM5.500 11l2.300 1.500L5 15z" fill="#444" />
      </Tool>
      <span className="ml-[19px] h-[27px] w-px bg-[#d4d4d4]" />
      <Tool className="ml-[17px]">
        <path d="M1.500 1h13v14h-13z" fill="#444" />
        <path d="M4 6.200h8M4 9.200h5" stroke="#f5f5f5" strokeWidth="1.300" />
      </Tool>
      <Tool className="ml-[28px] mr-[25px]">
        <circle cx="8" cy="8" r="7.700" fill="#444" />
        <path d="M5.800 6.200c0-3 4.600-2.800 4.600 0C10.400 8 8 7.800 8 9.600M8 11v1.700" fill="none" stroke="#f5f5f5" strokeWidth="1.700" />
      </Tool>
    </header>
  );
}

function Rail() {
  const box = "flex h-[46px] w-full items-center pl-[11px]";
  return (
    <nav className="flex w-[42px] shrink-0 flex-col border-r border-[#d9d9d9]">
      <span className={box}>
        <svg viewBox="0 0 14 14" className="h-[14px] w-[14px]" fill="none" stroke="#444" strokeWidth="1.200">
          <path d="M7 1l6 3-6 3-6-3zM1 6.800l6 3 6-3M1 9.800l6 3 6-3" />
        </svg>
      </span>
      <span className={`${box} bg-[#e8e8e8]`}>
        <svg viewBox="0 0 14 14" className="h-[14px] w-[14px]" fill="none" stroke="#444" strokeWidth="1.300">
          <path d="M7 .8l6 2.900v6.600l-6 2.900-6-2.900V3.700zM1.500 4L7 6.500 12.500 4M7 6.500V13" />
        </svg>
      </span>
      <span className={box}>
        <svg viewBox="0 0 14 14" className="h-[14px] w-[14px]" fill="none" stroke="#444" strokeWidth="1.400">
          <path d="M1 1.200h12v4H1zM1 9.200h12v3.600H1zM3.500 5.200v2h7v2" />
        </svg>
      </span>
      <span className="ml-[7px] mt-[4px] h-px w-[22px] bg-[#c4c4c4]" />
      <span className={`${box} mt-[4px]`}>
        <svg viewBox="0 0 14 14" className="h-[14px] w-[14px]" fill="none" stroke="#444" strokeWidth="1.400">
          <path d="M7 .8l5.800 3.100v6.200L7 13.200 1.200 10.100V3.900z" />
          <circle cx="7" cy="7" r="2.300" />
        </svg>
      </span>
    </nav>
  );
}

/* ---------------------------------------------------------------- */
/* Workspace                                                        */
/* ---------------------------------------------------------------- */

function Workspace() {
  return (
    <main className="relative flex w-[1999px] shrink-0 flex-col">
      <div className="flex h-[1279px] shrink-0">
        <SideRuler />
        <div className="flex flex-1 flex-col">
          <TopRuler />
          <div className="relative flex-1 bg-white">
            <DeviceMap />
            <span className="absolute bottom-[4px] left-[703px] h-[6px] w-[527px] rounded-full bg-[#b1b8c4]" />
            <span className="absolute left-[1967px] top-[367px] h-[340px] w-[6px] rounded-full bg-[#b1b8c4]" />
          </div>
        </div>
      </div>
      <span className="absolute left-0 top-[655px] flex h-[25px] w-[12px] items-center justify-center bg-[#f2f2f2] text-[#666]">
        <LuChevronLeft className="h-[13px] w-[13px] shrink-0" strokeWidth={1.8} />
      </span>
      <span className="absolute right-0 top-[655px] flex h-[25px] w-[12px] items-center justify-center bg-[#f2f2f2] text-[#666]">
        <LuChevronRight className="h-[13px] w-[13px] shrink-0" strokeWidth={1.8} />
      </span>
      <footer className="flex h-[27px] items-center pt-[5px] text-[#222]">
        <span className="ml-[20px] w-[44px]">视图</span>
        <span className="flex w-[69px] items-center gap-1"><Check />标尺</span>
        <span className="flex w-[69px] items-center gap-1"><Check on={false} />网格</span>
        <span className="flex items-center gap-1"><Check />参考线</span>
        <span className="ml-auto">适合画布</span>
        <svg viewBox="0 0 15 15" className="ml-[4px] h-[15px] w-[15px]" fill="none" stroke="#999">
          <path d="M.5.500h14v14H.5z" />
          <path d="M3 6V3h3M9 3h3v3M12 9v3H9M6 12H3V9" />
        </svg>
        <span className="ml-[25px]">缩放</span>
        <span className="mb-[2px] ml-[10px] flex w-[200px] items-center">
          <i className="h-[2px] w-[68px] bg-[#1965c1]" />
          <i className="h-[16px] w-[16px] shrink-0 rounded-full bg-white shadow-[0_1px_4px_rgba(0,0,0,0.2)]" />
          <i className="h-[2px] flex-1 bg-[#c0c0c0]" />
        </span>
        <span className="ml-[22px] mr-[29px] flex items-center gap-1"><Check />自适应</span>
      </footer>
    </main>
  );
}

/* ---------------------------------------------------------------- */
/* Inspector                                                        */
/* ---------------------------------------------------------------- */

function NumBox({ value, unit }: { value: string; unit: string }) {
  return (
    <span className="flex h-[24px] w-[72px] items-center justify-between border border-[#d9d9d9] bg-white pl-[8px] pr-[6px] text-[#333]">
      {value}
      <span className="text-[#777]">{unit}</span>
    </span>
  );
}

function Align({ d, thin, x, faded }: { d: string; thin: string; x: string; faded?: boolean }) {
  const color = faded ? "#a5a5a5" : "#444";
  return (
    <svg viewBox="0 0 14 14" className={`h-[14px] w-[14px] shrink-0 ${x}`}>
      <path d={d} fill={color} />
      <path d={thin} stroke={color} strokeWidth="1" />
    </svg>
  );
}

function Inspector() {
  return (
    <aside className="flex w-[285px] shrink-0 flex-col border-l border-[#d9d9d9] text-[#333]">
      <div className="flex h-[35px] shrink-0">
        <span className="flex w-[142px] items-center justify-center border-b-2 border-[#1965c1] font-bold text-[#1965c1]">样式</span>
        <span className="flex flex-1 items-center justify-center border-b border-[#c4c4c4] font-medium text-[#333]">交互</span>
      </div>
      <div className="flex h-[38px] shrink-0 items-center border-b border-[#c8c8c8]">
        <Align x="ml-[13px]" faded d="M4.500 1.500h5v11h-5z" thin="M.5 0v14M13.500 0v14" />
        <Align x="ml-[18px]" faded d="M2 4.500h10v5H2z" thin="M0 .5h14M0 13.500h14" />
        <svg viewBox="0 0 2 10" className="ml-[12px] h-[10px] w-[2px]">
          <path d="M0 0h2v2H0zM0 4h2v2H0zM0 8h2v2H0z" fill="#bbb" />
        </svg>
        <Align x="ml-[12px]" d="M2 4.500h11.500v5H2z" thin="M.5 0v14" />
        <Align x="ml-[18px]" d="M1 4.500h12v5H1z" thin="M7 0v14" />
        <Align x="ml-[18px]" d="M.5 4.500H12v5H.5z" thin="M13.500 0v14" />
        <Align x="ml-[18px]" d="M4.500 2h5v11h-5z" thin="M0 .5h14" />
        <Align x="ml-[18px]" d="M4.500 1h5v12h-5z" thin="M0 7h14" />
        <Align x="ml-[18px]" d="M4.500 1.500h5V12h-5z" thin="M0 13.500h14" />
      </div>
      <div className="flex h-[79px] shrink-0 flex-col gap-[10px] border-b border-[#e3e3e3] px-[12px] pt-[10px]">
        <div className="flex justify-between">
          <NumBox value="260" unit="X" />
          <NumBox value="104" unit="Y" />
          <NumBox value="0" unit="°" />
        </div>
        <div className="flex justify-between">
          <NumBox value="800" unit="W" />
          <NumBox value="480" unit="H" />
          <span className="flex w-[72px] justify-between">
            <span className="flex h-[24px] w-[30px] items-center justify-center border border-[#d9d9d9] bg-white">
              <svg viewBox="0 0 12 12" className="h-[12px] w-[12px]">
                <path d="M5.700 0v12H0z" fill="#bbb" />
                <path d="M6.300 0v12H12z" fill="#777" />
              </svg>
            </span>
            <span className="flex h-[24px] w-[30px] items-center justify-center border border-[#d9d9d9] bg-white">
              <svg viewBox="0 0 12 12" className="h-[12px] w-[12px]">
                <path d="M0 5.700h12L0 0z" fill="#bbb" />
                <path d="M0 6.300h12L0 12z" fill="#777" />
              </svg>
            </span>
          </span>
        </div>
      </div>
      <div className="flex h-[129px] shrink-0 flex-col border-b border-[#e3e3e3] px-[12px] pt-[16px]">
        <div className="flex h-[24px] items-center justify-between">
          <span>组件名称</span>
          <span className="flex h-[24px] w-[141px] items-center border border-[#d9d9d9] bg-white pl-[4px]">设备地图-cq6m</span>
        </div>
        <div className="mt-[13px] flex h-[20px] items-center gap-1 font-medium">
          <Check />
          组件可见性
        </div>
        <div className="mt-[15px] flex h-[24px] items-center">
          <span className="w-[119px]">不透明度</span>
          <i className="h-[2px] w-[79px] bg-[#1965c1]" />
          <i className="h-[16px] w-[16px] rounded-full bg-white shadow-[0_1px_4px_rgba(0,0,0,0.2)]" />
          <span className="ml-auto flex h-[24px] w-[42px] items-center justify-center border border-[#d9d9d9] bg-white">100%</span>
        </div>
      </div>
      <div className="px-[12px]">
        <div className="flex h-[36px] items-center pt-[1px] font-medium">设备地图</div>
        <button className="flex h-[32px] w-full items-center justify-center bg-[#1965c1] font-medium text-white">编辑设备地图</button>
        <div className="mt-[10px] leading-[20px] text-[#888]">
          <p>设备地图编辑步骤：</p>
          <p>1. 点击“编辑设备地图”打开编辑器</p>
          <p>2. 在设备地图编辑器进行开发</p>
          <p>3. 开发内容将实时同步到设备地图组件</p>
          <p>4. 点击组件，在左上角会显示刷新按钮，点击可刷新设备地图</p>
        </div>
      </div>
      <a className="mb-[18px] mt-auto text-center leading-[18px] text-[#1965c1]">如何配置设备地图</a>
    </aside>
  );
}

export default function App() {
  return (
    <div className="flex h-[1398px] w-[2555px] flex-col overflow-hidden bg-[#f5f5f5] font-['Liberation_Sans','Noto_Sans_CJK_SC',sans-serif] text-[12px] leading-[18px]">
      <BrowserBar />
      <Header />
      <div className="flex min-h-0 flex-1">
        <Rail />
        <Library />
        <Workspace />
        <Inspector />
      </div>
    </div>
  );
}
